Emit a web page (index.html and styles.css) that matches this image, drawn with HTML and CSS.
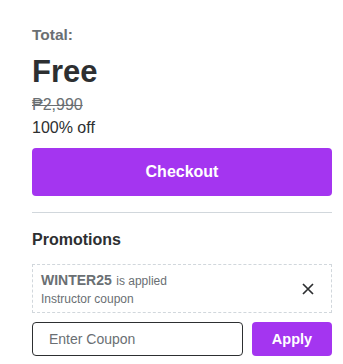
FILE: index.html
```html
<!DOCTYPE html>
<html>
<head>
<meta charset="utf-8">
<link rel="stylesheet" href="styles.css">
</head>
<body>
<div class="panel">
  <div class="total-label">Total:</div>
  <div class="price">Free</div>
  <div class="old-price">₱2,990</div>
  <div class="discount">100% off</div>
  <button class="btn checkout">Checkout</button>
  <hr class="divider">
  <div class="promo-title">Promotions</div>
  <div class="coupon">
    <div class="coupon-text">
      <div class="coupon-line"><span class="code">WINTER25</span> <span class="applied">is applied</span></div>
      <div class="coupon-sub">Instructor coupon</div>
    </div>
    <button class="remove" aria-label="Remove">
      <svg width="12" height="12" viewBox="0 0 12 12"><path d="M1 1L11 11M11 1L1 11" stroke="#2d2f31" stroke-width="1.7" fill="none"/></svg>
    </button>
  </div>
  <div class="apply-row">
    <input class="coupon-input" type="text" placeholder="Enter Coupon">
    <button class="btn apply">Apply</button>
  </div>
</div>
</body>
</html>
```
FILE: styles.css
```css
* { box-sizing: border-box; }
html, body { margin: 0; padding: 0; background: #fff; }
body { font-family: "Liberation Sans", Arial, sans-serif; color: #2d2f31; }
.panel { width: 300px; margin-left: 32px; padding-top: 25px; display: flex; flex-direction: column; }
.total-label { font-size: 15.5px; font-weight: 700; color: #6a6f73; line-height: 20px; }
.price { font-size: 31px; font-weight: 700; line-height: 36px; margin-top: 9px; }
.old-price { font-size: 16px; color: #6a6f73; text-decoration: line-through; line-height: 20px; margin-top: 5px; }
.discount { font-size: 16px; line-height: 20px; margin-top: 3px; }
.btn { border: none; background: #a435f0; color: #fff; font-family: inherit; font-weight: 700; font-size: 16px; border-radius: 4px; cursor: pointer; padding: 0; }
.checkout { height: 48px; margin-top: 10px; width: 100%; }
.divider { border: none; border-top: 1px solid #d1d7dc; margin: 16px 0 0; }
.promo-title { font-size: 16px; font-weight: 700; line-height: 20px; margin-top: 17px; }
.coupon { margin-top: 14px; border: 1px dashed #d1d7dc; height: 49px; padding: 0 17px 0 8px; display: flex; align-items: center; justify-content: space-between; }
.coupon-line { color: #6a6f73; line-height: 17px; }
.code { font-size: 14px; font-weight: 700; }
.applied { font-size: 12px; }
.coupon-sub { font-size: 12px; color: #6a6f73; line-height: 16px; margin-top: 1px; }
.remove { border: none; background: none; padding: 0; display: flex; }
.apply-row { display: flex; gap: 9px; margin-top: 9px; }
.coupon-input { display: block; flex: 1; min-width: 0; width: 0; height: 34px; border: 1px solid #2d2f31; border-radius: 4px; padding: 0 16px; font-family: inherit; font-size: 14px; color: #2d2f31; outline: none; }
.coupon-input::placeholder { color: #6a6f73; }
.apply { flex: 0 0 80px; height: 34px; font-size: 14.5px; }
```
